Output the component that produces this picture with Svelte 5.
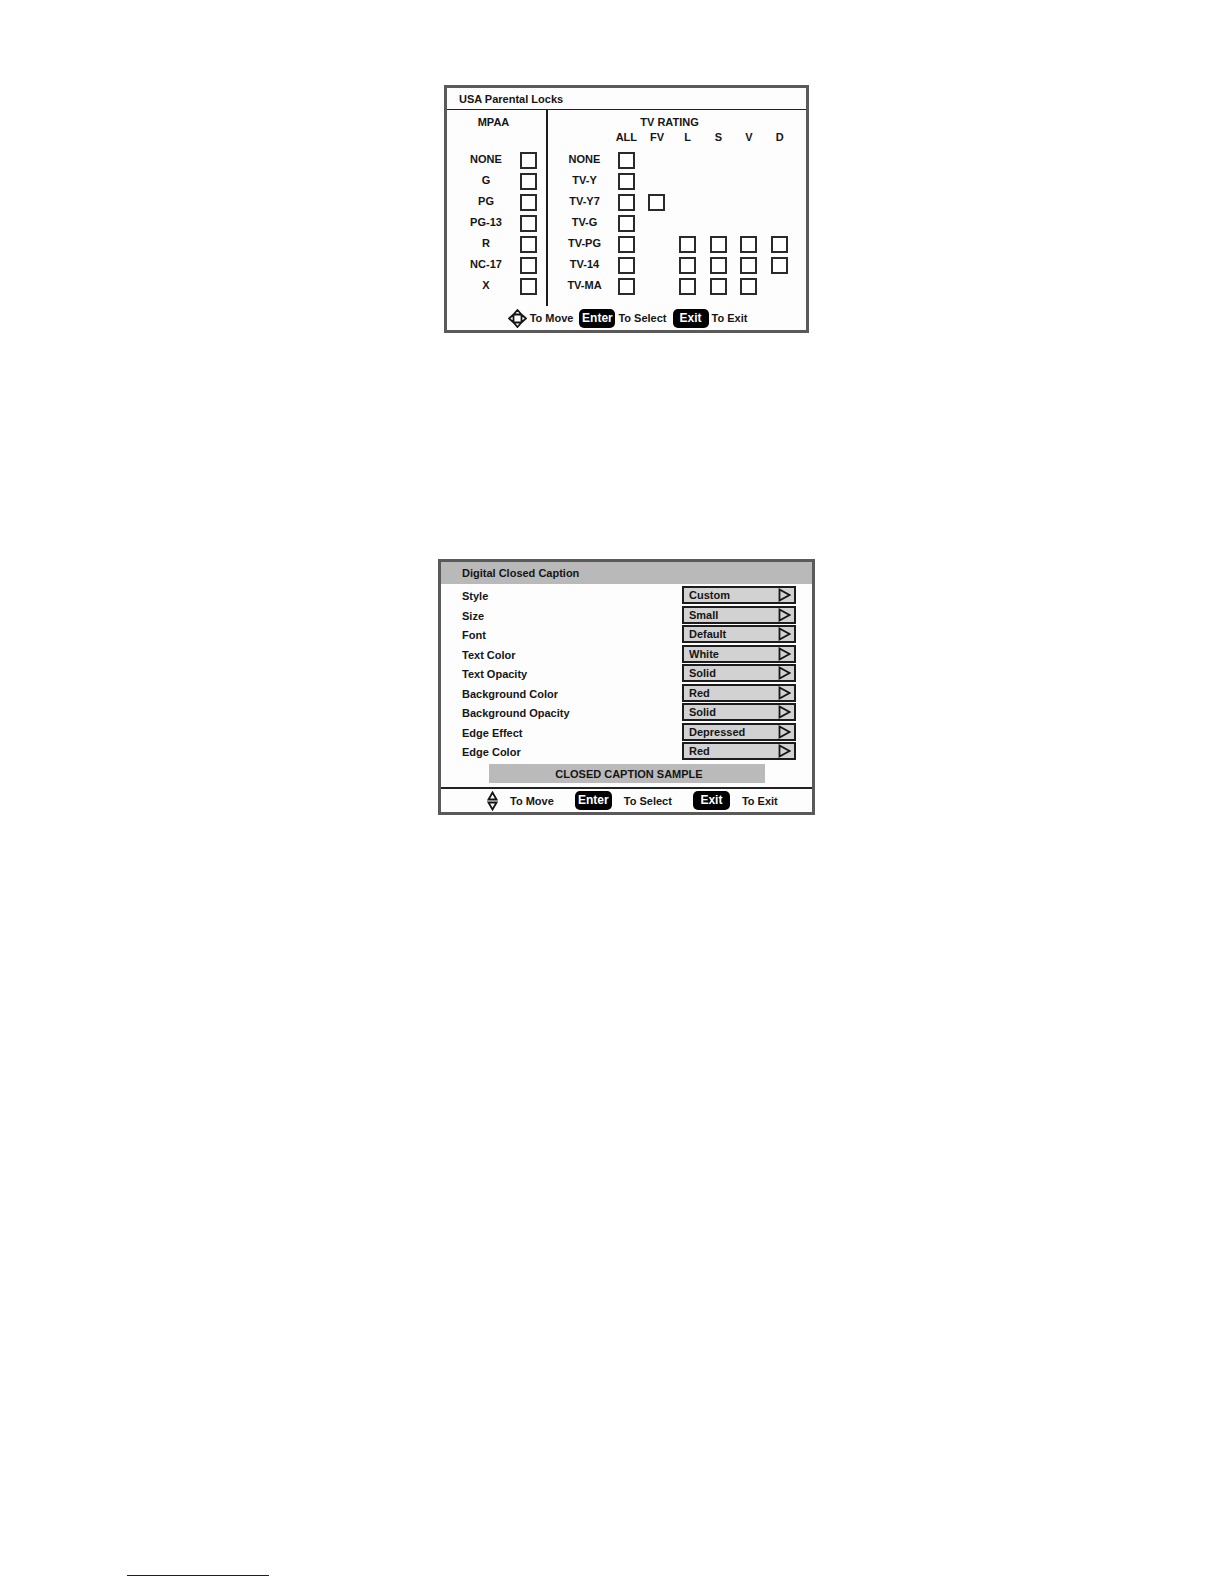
<script>
  const mpaa = ['NONE', 'G', 'PG', 'PG-13', 'R', 'NC-17', 'X'];
  const columns = ['ALL', 'FV', 'L', 'S', 'V', 'D'];
  const tv = [
    { name: 'NONE', boxes: ['ALL'] },
    { name: 'TV-Y', boxes: ['ALL'] },
    { name: 'TV-Y7', boxes: ['ALL', 'FV'] },
    { name: 'TV-G', boxes: ['ALL'] },
    { name: 'TV-PG', boxes: ['ALL', 'L', 'S', 'V', 'D'] },
    { name: 'TV-14', boxes: ['ALL', 'L', 'S', 'V', 'D'] },
    { name: 'TV-MA', boxes: ['ALL', 'L', 'S', 'V'] },
  ];
  const settings = [
    ['Style', 'Custom'],
    ['Size', 'Small'],
    ['Font', 'Default'],
    ['Text Color', 'White'],
    ['Text Opacity', 'Solid'],
    ['Background Color', 'Red'],
    ['Background Opacity', 'Solid'],
    ['Edge Effect', 'Depressed'],
    ['Edge Color', 'Red'],
  ];
</script>

<main>
  <section class="panel locks">
    <h2>USA Parental Locks</h2>
    <div class="panes">
      <div class="pane mpaa">
        <table>
          <caption>MPAA</caption>
          <colgroup><col class="name" /><col /></colgroup>
          <thead><tr><td></td><td></td></tr></thead>
          <tbody>
            {#each mpaa as name}
              <tr>
                <th scope="row">{name}</th>
                <td><input type="checkbox" aria-label={`MPAA ${name}`} /></td>
              </tr>
            {/each}
          </tbody>
        </table>
      </div>
      <div class="pane tv">
        <table>
          <caption>TV RATING</caption>
          <colgroup><col class="name" /><col span="6" /></colgroup>
          <thead>
            <tr>
              <td></td>
              {#each columns as column}<th scope="col">{column}</th>{/each}
            </tr>
          </thead>
          <tbody>
            {#each tv as row}
              <tr>
                <th scope="row">{row.name}</th>
                {#each columns as column}
                  <td>
                    {#if row.boxes.includes(column)}
                      <input type="checkbox" aria-label={`${row.name} ${column}`} />
                    {/if}
                  </td>
                {/each}
              </tr>
            {/each}
          </tbody>
        </table>
      </div>
    </div>
    <footer>
      <span class="hint">
        <svg width="19" height="19" viewBox="0 0 19 19" aria-hidden="true">
          <path d="M9.500 1 L13.500 5.500 H5.500Z M9.500 18 L13.500 13.500 H5.500Z M1 9.500 L5.500 5.500 V13.500Z M18 9.500 L13.500 5.500 V13.500Z" />
        </svg>
        To Move
      </span>
      <span class="hint"><button type="button">Enter</button>To Select</span>
      <span class="hint"><button type="button">Exit</button>To Exit</span>
    </footer>
  </section>

  <section class="panel captions">
    <h2>Digital Closed Caption</h2>
    <div class="settings">
      {#each settings as [label, value], i}
        <div class="setting">
          <label for={`setting-${i}`}>{label}</label>
          <div class="choice">
            <select id={`setting-${i}`}><option>{value}</option></select>
            <svg width="13" height="14" viewBox="0 0 13 14" aria-hidden="true">
              <path d="M1.500 1.500 L11.500 7 L1.500 12.500Z" />
            </svg>
          </div>
        </div>
      {/each}
    </div>
    <p class="sample">CLOSED CAPTION SAMPLE</p>
    <footer>
      <span class="hint">
        <svg width="11" height="20" viewBox="0 0 11 20" aria-hidden="true">
          <path d="M5.500 1.500 L9.500 8.500 H1.500Z M5.500 18.500 L9.500 11.500 H1.500Z" />
        </svg>
        To Move
      </span>
      <span class="hint"><button type="button">Enter</button>To Select</span>
      <span class="hint"><button type="button">Exit</button>To Exit</span>
    </footer>
  </section>

  <nav><a href="#top" aria-label="Back to top"></a></nav>
</main>

<style>
  :global(body) {
    background: #fff;
  }
  main {
    box-sizing: border-box;
    min-height: 100vh;
    padding: 85px 0 8px;
    display: flex;
    flex-direction: column;
    font: bold 11px/16px 'Liberation Sans', Arial, sans-serif;
    color: #151515;
  }
  .panel {
    box-sizing: border-box;
    width: 100%;
    border: 3px solid #5a5a5a;
    background: #fdfdfd;
    margin-left: 29px;
    align-self: center;
  }
  .locks {
    max-width: 365px;
  }
  .captions {
    max-width: 377px;
    margin-top: 226px;
  }
  h2 {
    margin: 0;
    font-size: 11px;
    line-height: 21px;
  }
  .locks h2 {
    padding-top: 1px;
    padding-left: 12px;
    line-height: 20px;
    border-bottom: 1px solid #222;
  }
  .captions h2 {
    padding-left: 21px;
    line-height: 22px;
    background: #b9b9b9;
  }

  .panes {
    display: flex;
  }
  .pane {
    box-sizing: border-box;
    padding: 4px 0 9px;
  }
  .mpaa {
    width: 101px;
    padding-left: 11px;
    padding-right: 3px;
    border-right: 2px solid #1c1c1c;
  }
  .tv {
    flex: 1;
    padding-left: 10px;
    padding-right: 11px;
  }
  table {
    width: 100%;
    table-layout: fixed;
    border-collapse: collapse;
  }
  caption {
    padding-right: 14px;
  }
  .mpaa .name {
    width: 56px;
  }
  .tv .name {
    width: 53px;
  }
  th,
  td {
    padding: 0;
    height: 21px;
    text-align: center;
    vertical-align: middle;
  }
  tbody th {
    height: 18px;
    padding-bottom: 3px;
  }
  thead th,
  thead td {
    height: 14px;
    line-height: 14px;
    padding-bottom: 6px;
  }
  input {
    appearance: none;
    display: block;
    box-sizing: border-box;
    width: 17px;
    height: 17px;
    margin: 0 auto;
    border: 2px solid #2a2a2a;
    background: #fff;
  }
  input:checked {
    background: #2a2a2a;
  }

  footer {
    display: flex;
    align-items: center;
  }
  .hint {
    display: flex;
    align-items: center;
    white-space: nowrap;
  }
  .locks footer {
    justify-content: center;
    gap: 6px;
    height: 24px;
    padding-left: 2px;
  }
  .locks .hint {
    gap: 3px;
  }
  .captions footer {
    gap: 21px;
    height: 23px;
    padding-left: 46px;
    border-top: 2px solid #222;
  }
  .captions .hint {
    gap: 12px;
  }
  svg {
    display: block;
    fill: none;
    stroke: #151515;
    stroke-width: 1.8;
  }
  button {
    width: 36px;
    height: 19px;
    padding: 0;
    border: 0;
    border-radius: 5px;
    background: #000;
    color: #fff;
    font: bold 12px/19px 'Liberation Sans', Arial, sans-serif;
  }
  .captions button {
    width: 37px;
  }

  .settings {
    display: flex;
    flex-direction: column;
    justify-content: space-between;
    min-height: 174px;
    padding: 2px 16px 4px 21px;
  }
  .setting {
    display: flex;
    align-items: center;
    justify-content: space-between;
  }
  label {
    padding-top: 2px;
  }
  .choice {
    display: grid;
    align-items: center;
    width: 114px;
  }
  .choice > * {
    grid-area: 1 / 1;
  }
  .choice svg {
    justify-self: end;
    margin-right: 5px;
    pointer-events: none;
  }
  select {
    appearance: none;
    box-sizing: border-box;
    width: 100%;
    height: 18px;
    margin: 0;
    padding: 0 20px 0 5px;
    border: 2px solid #1c1c1c;
    border-radius: 0;
    background: #d2d2d2;
    color: inherit;
    font: bold 11px/14px 'Liberation Sans', Arial, sans-serif;
  }
  .sample {
    margin: 0 47px 4px 48px;
    padding: 1px 0 0 4px;
    line-height: 18px;
    text-align: center;
    background: #bababa;
  }

  nav {
    margin-top: auto;
    padding-left: 127px;
  }
  a {
    display: block;
    width: 142px;
    border-bottom: 1px solid #14147a;
  }
</style>
